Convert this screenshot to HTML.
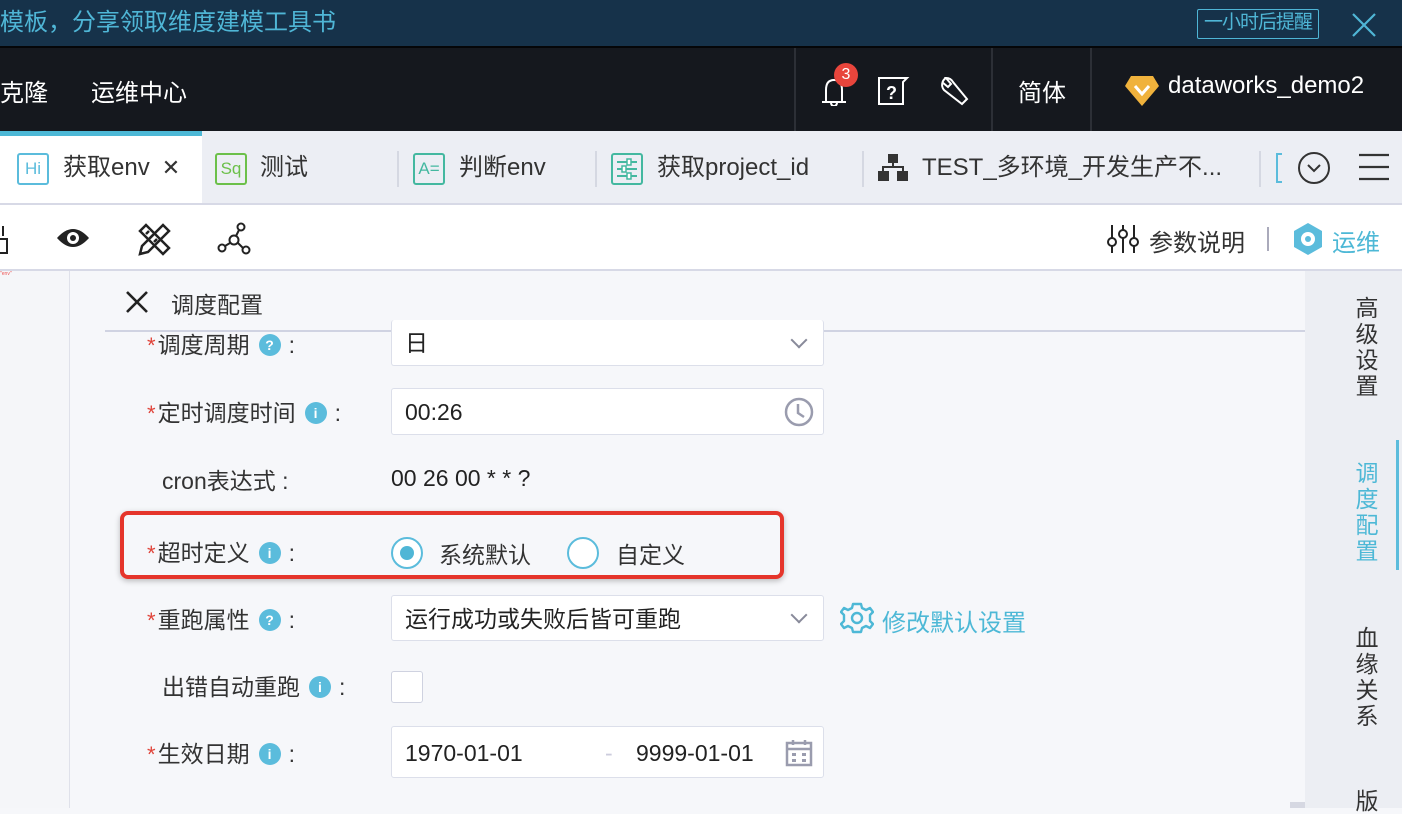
<!DOCTYPE html>
<html><head><meta charset="utf-8"><style>
*{margin:0;padding:0;box-sizing:border-box}
body{width:1402px;height:808px;overflow:hidden;position:relative;font-family:"Liberation Sans","Noto Sans CJK SC",sans-serif;background:#f6f7fa;color:#333}
.a{position:absolute;white-space:nowrap}
.lbl{font-size:23px;color:#333}
.star{color:#e0443a;font-size:22px;margin-right:2px}
.ic{display:inline-block;width:22px;height:22px;border-radius:50%;background:#5bbcdc;color:#fff;font-size:14px;font-weight:bold;text-align:center;line-height:22px;vertical-align:3px;margin:0 8px 0 9px}
.inp{position:absolute;background:#fff;border:1.5px solid #dcdfea;border-radius:3px;font-size:23px;color:#222;padding-left:13px}
.chev{position:absolute;right:18px;top:50%;width:12px;height:12px;border-right:2.5px solid #888a9a;border-bottom:2.5px solid #888a9a;transform:translateY(-75%) rotate(45deg)}
.tab{position:absolute;top:131px;height:74px;font-size:24px;color:#333;line-height:74px}
.tico{position:absolute;top:22px;width:32px;height:32px;border:2px solid;border-radius:3px;font-size:17px;line-height:28px;text-align:center}
.sep{position:absolute;width:2px;background:#d5d8e2}
.vt{position:absolute;left:1354px;width:26px;font-size:23px;line-height:26px;text-align:center;white-space:normal}
</style></head><body>
<!-- banner -->
<div class="a" style="left:0;top:0;width:1402px;height:46px;background:#16324a"></div>
<div class="a" style="left:0;top:7px;font-size:24px;color:#4fb6d6;line-height:32px">模板，分享领取维度建模工具书</div>
<div class="a" style="left:1197px;top:9px;width:122px;height:30px;border:1.5px solid #4fb6d6;border-radius:2px;color:#4fb6d6;font-size:19px;line-height:26px;text-align:center;letter-spacing:-1px">一小时后提醒</div>
<svg class="a" style="left:1351px;top:12px" width="26" height="26"><path d="M2 2L24 24M24 2L2 24" stroke="#4fb6d6" stroke-width="2.2"/></svg>
<!-- nav -->
<div class="a" style="left:0;top:46px;width:1402px;height:85px;background:#15181e;border-top:2px solid #050608"></div>
<div class="a" style="left:0;top:73px;font-size:24px;color:#fff">克隆</div>
<div class="a" style="left:91px;top:73px;font-size:24px;color:#fff">运维中心</div>
<div class="sep" style="left:794px;top:48px;height:83px;background:#2c2f36"></div>
<div class="sep" style="left:991px;top:48px;height:83px;background:#2c2f36"></div>
<div class="sep" style="left:1090px;top:48px;height:83px;background:#2c2f36"></div>
<svg class="a" style="left:818px;top:74px" width="34" height="32"><path d="M4 28H28M8 28V16Q8 6 16 6Q24 6 24 16V28M13 28Q13 32 16 32Q19 32 19 28" fill="none" stroke="#fff" stroke-width="2"/></svg>
<div class="a" style="left:834px;top:63px;width:24px;height:24px;border-radius:50%;background:#e8453c;color:#fff;font-size:16px;text-align:center;line-height:24px">3</div>
<svg class="a" style="left:876px;top:74px" width="34" height="32"><path d="M3 4H31L27 8V30H3Z" fill="none" stroke="#fff" stroke-width="2"/><text x="10" y="25" fill="#fff" font-size="18" font-family="Liberation Sans" font-weight="bold">?</text></svg>
<svg class="a" style="left:938px;top:74px" width="34" height="32"><path d="M8 4A8 8 0 0 0 6 16L24 30L29 25L15 8A8 8 0 0 0 8 4L13 10L10 13L4 8" fill="none" stroke="#fff" stroke-width="2"/></svg>
<div class="a" style="left:1018px;top:73px;font-size:24px;color:#fff">简体</div>
<svg class="a" style="left:1124px;top:74px" width="36" height="34"><path d="M7 2H29L35 12L18 32L1 12Z" fill="#f0b23c"/><path d="M11 12L18 20L25 12" fill="none" stroke="#fff" stroke-width="3"/></svg>
<div class="a" style="left:1168px;top:72px;font-size:24px;color:#fff">dataworks_demo2</div>
<!-- tabs -->
<div class="a" style="left:0;top:131px;width:1402px;height:74px;background:#eceef4;border-bottom:2px solid #d7d9e6"></div>
<div class="a" style="left:0;top:131px;width:202px;height:72px;background:#fff;border-top:5px solid #4db8d6"></div>
<div class="tab" style="left:17px"><div class="tico" style="left:0;border-color:#5bbcdc;color:#5bbcdc">Hi</div><span style="margin-left:46px">获取env</span><span style="margin-left:12px;font-size:22px">✕</span></div>
<div class="tab" style="left:215px"><div class="tico" style="left:0;border-color:#6cc04a;color:#6cc04a">Sq</div><span style="margin-left:45px">测试</span></div>
<div class="sep" style="left:397px;top:151px;height:36px"></div>
<div class="tab" style="left:413px"><div class="tico" style="left:0;border-color:#44b8a0;color:#44b8a0">A=</div><span style="margin-left:46px">判断env</span></div>
<div class="sep" style="left:595px;top:151px;height:36px"></div>
<div class="tab" style="left:611px"><div class="tico" style="left:0;border-color:#44b8a0;color:#44b8a0"><svg width="28" height="28" style="display:block"><path d="M4 7H24M4 14H24M4 21H24" stroke="#44b8a0" stroke-width="2"/><rect x="14" y="4" width="4" height="6" fill="#fff" stroke="#44b8a0" stroke-width="1.5"/><rect x="9" y="11" width="4" height="6" fill="#fff" stroke="#44b8a0" stroke-width="1.5"/><rect x="14" y="18" width="4" height="6" fill="#fff" stroke="#44b8a0" stroke-width="1.5"/></svg></div><span style="margin-left:46px">获取project_id</span></div>
<div class="sep" style="left:862px;top:151px;height:36px"></div>
<svg class="a" style="left:878px;top:153px" width="30" height="28"><rect x="10" y="1" width="10" height="9" fill="#333"/><rect x="0" y="18" width="11" height="10" fill="#333"/><rect x="19" y="18" width="11" height="10" fill="#333"/><path d="M15 10V14M5 18V14H25V18" stroke="#333" stroke-width="2" fill="none"/></svg>
<div class="tab" style="left:922px">TEST_多环境_开发生产不...</div>
<div class="sep" style="left:1259px;top:151px;height:36px"></div>
<div class="a" style="left:1276px;top:153px;width:6px;height:30px;border:2px solid #5bbcdc;border-right:none"></div>
<svg class="a" style="left:1297px;top:151px" width="34" height="34"><circle cx="17" cy="17" r="15" fill="none" stroke="#333" stroke-width="2"/><path d="M11 14L17 20L23 14" fill="none" stroke="#333" stroke-width="2"/></svg>
<svg class="a" style="left:1358px;top:153px" width="32" height="28"><path d="M1 2H31M1 14H31M1 26H31" stroke="#333" stroke-width="2.2"/></svg>
<!-- toolbar -->
<div class="a" style="left:0;top:205px;width:1402px;height:66px;background:#fff;border-bottom:2px solid #d7d9e6"></div>
<div class="a" style="left:0;top:238px;width:8px;height:16px;border:2.5px solid #222;border-left:none"></div>
<div class="a" style="left:0;top:226px;width:4px;height:10px;border-right:2.5px solid #222"></div>
<svg class="a" style="left:56px;top:226px" width="34" height="24"><path d="M1 12Q17 -6 33 12Q17 30 1 12Z" fill="#222"/><circle cx="17" cy="12" r="6" fill="#fff"/><circle cx="17" cy="12" r="3" fill="#222"/></svg>
<svg class="a" style="left:137px;top:222px" width="34" height="34"><path d="M3 9L9 3L32 26L26 32ZM9 12L12 9M13 16L16 13M17 20L20 17" fill="none" stroke="#222" stroke-width="2.5"/><path d="M26 3L32 9L11 30L3 32L5 24Z" fill="none" stroke="#222" stroke-width="2.5"/></svg>
<svg class="a" style="left:217px;top:222px" width="34" height="34"><circle cx="24" cy="5" r="3.5" fill="none" stroke="#222" stroke-width="2"/><circle cx="17" cy="18" r="4.5" fill="none" stroke="#222" stroke-width="2"/><circle cx="5" cy="26" r="3.5" fill="none" stroke="#222" stroke-width="2"/><circle cx="29" cy="28" r="3.5" fill="none" stroke="#222" stroke-width="2"/><path d="M22 8L19 14M13 21L8 24M21 21L26 26" stroke="#222" stroke-width="2"/></svg>
<svg class="a" style="left:1107px;top:224px" width="32" height="30"><path d="M5 1V29M16 1V29M27 1V29" stroke="#222" stroke-width="2"/><circle cx="5" cy="18" r="4" fill="#fff" stroke="#222" stroke-width="2"/><circle cx="16" cy="10" r="4" fill="#fff" stroke="#222" stroke-width="2"/><circle cx="27" cy="18" r="4" fill="#fff" stroke="#222" stroke-width="2"/></svg>
<div class="a" style="left:1149px;top:223px;font-size:24px;color:#333">参数说明</div>
<div class="sep" style="left:1267px;top:227px;height:24px;background:#aab"></div>
<svg class="a" style="left:1293px;top:222px" width="30" height="34"><path d="M15 1L29 9V25L15 33L1 25V9Z" fill="#5bbcdc"/><circle cx="15" cy="17" r="7" fill="#fff"/><circle cx="15" cy="17" r="3" fill="#5bbcdc"/></svg>
<div class="a" style="left:1332px;top:223px;font-size:24px;color:#4db8d6">运维</div>
<!-- left pane -->
<div class="a" style="left:0;top:271px;width:70px;height:537px;background:#f5f6f9;border-right:1px solid #dfe1ea"></div>
<div class="a" style="left:0;top:271px;font-size:5px;color:#e55">"env"</div>
<!-- header -->
<svg class="a" style="left:125px;top:290px" width="24" height="24"><path d="M2 2L22 22M22 2L2 22" stroke="#222" stroke-width="2.6"/></svg>
<div class="a" style="left:171px;top:286px;font-size:23px;color:#333">调度配置</div>
<div class="a" style="left:105px;top:330px;width:1200px;height:2px;background:#d0d3e2"></div>
<!-- right sidebar -->
<div class="a" style="left:1305px;top:271px;width:97px;height:537px;background:#eceef3"></div>
<div class="a" style="left:1396px;top:440px;width:3px;height:130px;background:#5bbcdc"></div>
<div class="vt" style="top:295px;color:#333">高级设置</div>
<div class="vt" style="top:460px;color:#4db8d6">调度配置</div>
<div class="vt" style="top:625px;color:#333">血缘关系</div>
<div class="vt" style="top:788px;color:#333">版</div>
<div class="a" style="left:1290px;top:802px;width:15px;height:6px;background:#d6d8e2"></div>
<!-- form -->
<div class="inp" style="left:391px;top:320px;width:433px;height:46px;border-top:none;line-height:46px">日<div class="chev"></div></div>
<div class="a lbl" style="left:147px;top:326px"><span class="star">*</span>调度周期<span class="ic">?</span>:</div>
<div class="a lbl" style="left:147px;top:394px"><span class="star">*</span>定时调度时间<span class="ic">i</span>:</div>
<div class="inp" style="left:391px;top:388px;width:433px;height:47px;line-height:46px">00:26
<svg style="position:absolute;right:9px;top:8px" width="30" height="30"><circle cx="15" cy="15" r="13" fill="none" stroke="#9a9cae" stroke-width="2.5"/><path d="M14 7V16L20 20" fill="none" stroke="#9a9cae" stroke-width="2.5"/></svg></div>
<div class="a lbl" style="left:162px;top:462px">cron表达式 :</div>
<div class="a" style="left:391px;top:465px;font-size:23px;color:#222">00 26 00 * * ?</div>
<div class="a" style="left:120px;top:511px;width:664px;height:68px;border:4px solid #e5352b;border-radius:8px;box-shadow:0 2px 6px rgba(0,0,0,.25)"></div>
<div class="a lbl" style="left:147px;top:534px"><span class="star">*</span>超时定义<span class="ic">i</span>:</div>
<div class="a" style="left:391px;top:537px;width:32px;height:32px;border-radius:50%;border:2px solid #5bbcdc;background:#fff"><div style="position:absolute;left:7px;top:7px;width:14px;height:14px;border-radius:50%;background:#4fb6d6"></div></div>
<div class="a" style="left:439px;top:536px;font-size:23px;color:#333">系统默认</div>
<div class="a" style="left:567px;top:537px;width:32px;height:32px;border-radius:50%;border:2px solid #5bbcdc;background:#fff"></div>
<div class="a" style="left:616px;top:536px;font-size:23px;color:#333">自定义</div>
<div class="a lbl" style="left:147px;top:601px"><span class="star">*</span>重跑属性<span class="ic">?</span>:</div>
<div class="inp" style="left:391px;top:595px;width:433px;height:46px;line-height:46px">运行成功或失败后皆可重跑<div class="chev"></div></div>
<svg class="a" style="left:840px;top:602px" width="34" height="32"><path d="M17 2L21 2L22 6L26 8L30 6L33 10L30 13L30 19L33 22L30 26L26 24L22 26L21 30H13L12 26L8 24L4 26L1 22L4 19V13L1 10L4 6L8 8L12 6L13 2Z" fill="none" stroke="#4db8d6" stroke-width="2.4" stroke-linejoin="round"/><circle cx="17" cy="16" r="5" fill="none" stroke="#4db8d6" stroke-width="2.4"/></svg>
<div class="a" style="left:882px;top:603px;font-size:24px;color:#4db8d6">修改默认设置</div>
<div class="a lbl" style="left:162px;top:668px">出错自动重跑<span class="ic">i</span>:</div>
<div class="a" style="left:391px;top:671px;width:32px;height:32px;border:1.5px solid #cfd2e0;border-radius:3px;background:#fff"></div>
<div class="a lbl" style="left:147px;top:735px"><span class="star">*</span>生效日期<span class="ic">i</span>:</div>
<div class="inp" style="left:391px;top:726px;width:433px;height:52px;line-height:52px">1970-01-01<span style="position:absolute;left:213px;color:#ccd">-</span><span style="position:absolute;left:244px">9999-01-01</span>
<svg style="position:absolute;right:10px;top:12px" width="28" height="28"><rect x="2" y="4" width="24" height="22" fill="none" stroke="#9a9cae" stroke-width="2.5"/><path d="M8 1V6M20 1V6M2 10H26" stroke="#9a9cae" stroke-width="2.5"/><rect x="7" y="14" width="4" height="3" fill="#9a9cae"/><rect x="17" y="14" width="4" height="3" fill="#9a9cae"/><rect x="7" y="20" width="4" height="3" fill="#9a9cae"/><rect x="17" y="20" width="4" height="3" fill="#9a9cae"/></svg></div>
</body></html>
